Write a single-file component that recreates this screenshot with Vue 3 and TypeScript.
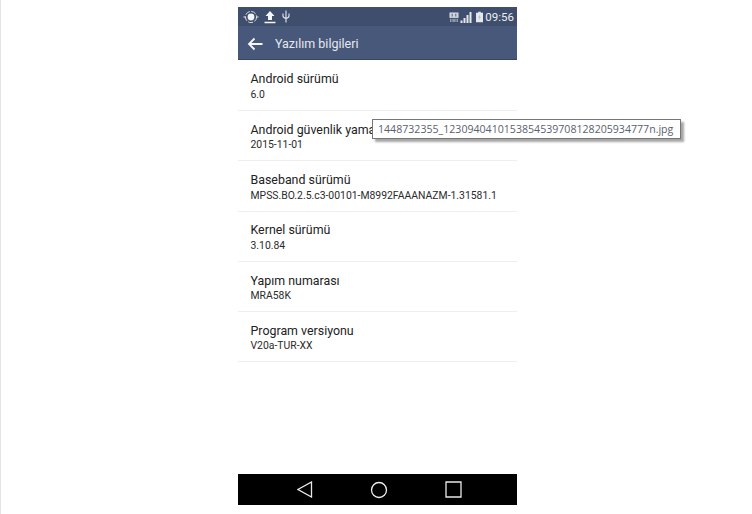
<template>
  <div class="page">
    <div class="phone">
      <div class="status-bar">
        <div class="status-left">
          <svg width="16" height="14" viewBox="0 0 16 14">
            <circle cx="8" cy="7" r="5.600" fill="none" stroke="#d5dae3" stroke-width="1" stroke-dasharray="5 1.500" />
            <circle cx="8" cy="7" r="3.400" fill="#f4f5f8" />
            <path d="M.5 7h2M13.500 7h2" stroke="#e8ebf0" stroke-width="1.200" />
          </svg>
          <svg width="12" height="14" viewBox="0 0 12 14">
            <path d="M6 1 10.500 6H8v4H4V6H1.500Z" fill="#f4f5f8" />
            <path d="M.5 12.500h11" stroke="#f4f5f8" stroke-width="1.500" />
          </svg>
          <svg class="usb" width="8" height="13" viewBox="0 0 8 13">
            <path d="M4 .5V12.500M1 3.500V6Q1 7.500 4 8.500Q7 7.500 7 6V3.500" fill="none" stroke="#e6e9ef" stroke-width="1.100" />
          </svg>
        </div>
        <div class="status-right">
          <svg width="10" height="12" viewBox="0 0 11 12">
            <path d="M.5 1h10v6H.5Z" fill="#cfd4de" />
            <path d="M3 2.500h1v3H3ZM7 2.500h1v3H7Z" fill="#46556f" />
            <path d="M2 8v3.500M4.500 8v3.500M6.500 8v3.500M9 8v3.500" stroke="#cfd4de" stroke-width="1" />
          </svg>
          <svg class="signal" width="12" height="12" viewBox="0 0 12 12">
            <path d="M.5 9.500h2V12h-2ZM3.500 7h2v5h-2ZM6.500 4h2v8h-2ZM9.500 1h2v11h-2Z" fill="#e4e7ed" />
          </svg>
          <svg class="battery" width="7" height="12" viewBox="0 0 8 12">
            <path d="M2.500 0h3v1.200H8V12H0V1.200h2.500Z" fill="#e4e7ed" />
            <path d="M4.500 3 2.500 6.500h1.500L3.500 9.500 5.500 5.800H4Z" fill="#aab2c0" />
          </svg>
          <span class="clock">09:56</span>
        </div>
      </div>
      <div class="app-bar">
        <svg width="16" height="14" viewBox="0 0 16 14">
          <path d="M15.500 7H2M7.500 1.500 2 7l5.500 5.500" fill="none" stroke="#f6f7fa" stroke-width="1.800" />
        </svg>
        <span class="app-title">Yazılım bilgileri</span>
      </div>
      <div class="list">
        <div v-for="item in items" :key="item.label" class="row">
          <div class="row-label">{{ item.label }}</div>
          <div class="row-value">{{ item.value }}</div>
        </div>
      </div>
      <div class="nav-bar">
        <svg width="16" height="17" viewBox="0 0 16 17">
          <path d="M14.500 1V16L1 8.500Z" fill="none" stroke="#e8e8e8" stroke-width="1.300" />
        </svg>
        <svg width="18" height="18" viewBox="0 0 18 18">
          <circle cx="9" cy="9" r="7.500" fill="none" stroke="#efefef" stroke-width="1.300" />
        </svg>
        <svg width="17" height="17" viewBox="0 0 17 17">
          <path d="M1 1H16V16H1Z" fill="none" stroke="#e8e8e8" stroke-width="1.300" />
        </svg>
      </div>
    </div>
    <div class="tooltip">1448732355_1230940410153854539708128205934777n.jpg</div>
  </div>
</template>

<script setup lang="ts">
const items = [
  { label: 'Android sürümü', value: '6.0' },
  { label: 'Android güvenlik yaması', value: '2015-11-01' },
  { label: 'Baseband sürümü', value: 'MPSS.BO.2.5.c3-00101-M8992FAAANAZM-1.31581.1' },
  { label: 'Kernel sürümü', value: '3.10.84' },
  { label: 'Yapım numarası', value: 'MRA58K' },
  { label: 'Program versiyonu', value: 'V20a-TUR-XX' }
]
</script>

<style>
html,
body {
  margin: 0;
  background: #fff;
  overflow: hidden;
}
</style>

<style scoped>
.page {
  position: relative;
  box-sizing: border-box;
  width: 752px;
  height: 514px;
  padding-top: 7px;
  background: #fff;
  border-left: 1px solid #e3e3e3;
  font-family: "Roboto", "Liberation Sans", sans-serif;
}

.phone {
  display: flex;
  flex-direction: column;
  width: 279px;
  height: 498px;
  margin-left: 237px;
}

.status-bar {
  display: flex;
  align-items: center;
  justify-content: space-between;
  flex: none;
  height: 19px;
  padding: 0 3px 0 5px;
  background: #3f4e6c;
}

.status-left {
  display: flex;
  align-items: center;
  gap: 5px;
}

.usb {
  margin-left: 1px;
}

.status-right {
  display: flex;
  align-items: center;
}

.signal {
  margin-left: 1px;
}

.battery {
  margin-left: 4px;
}

.clock {
  margin-left: 2px;
  font-size: 11.500px;
  color: #eceef2;
}

.app-bar {
  display: flex;
  align-items: center;
  flex: none;
  box-sizing: border-box;
  height: 34px;
  padding: 2px 0 0 9px;
  background: #47587a;
  border-bottom: 1px solid #3a4660;
}

.app-title {
  margin-left: 12px;
  font-size: 12.500px;
  color: #e6e9ef;
}

.list {
  flex: 1;
  padding-top: 0.700px;
}

.row {
  box-sizing: border-box;
  height: 50.300px;
  padding: 10.800px 12.500px 0;
  border-bottom: 1px solid #eeeeee;
}

.row-label {
  font-size: 12.400px;
  line-height: 16px;
  color: #222;
}

.row-value {
  margin-top: 1.500px;
  font-size: 10.400px;
  line-height: 12px;
  color: #2b2b2b;
  white-space: nowrap;
}

.nav-bar {
  display: flex;
  align-items: center;
  justify-content: center;
  gap: 57px;
  flex: none;
  height: 31px;
  padding-left: 3px;
  background: #000;
}

.tooltip {
  position: absolute;
  left: 371px;
  top: 119px;
  box-sizing: border-box;
  width: 309px;
  height: 20px;
  padding: 0 0 0 5px;
  background: #fff;
  border: 1px solid #767676;
  box-shadow: 3px 3px 2px rgba(0, 0, 0, 0.35);
  font-family: "Open Sans", "Liberation Sans", sans-serif;
  font-size: 10.600px;
  line-height: 18px;
  color: #5a5f6e;
  white-space: nowrap;
}
</style>
